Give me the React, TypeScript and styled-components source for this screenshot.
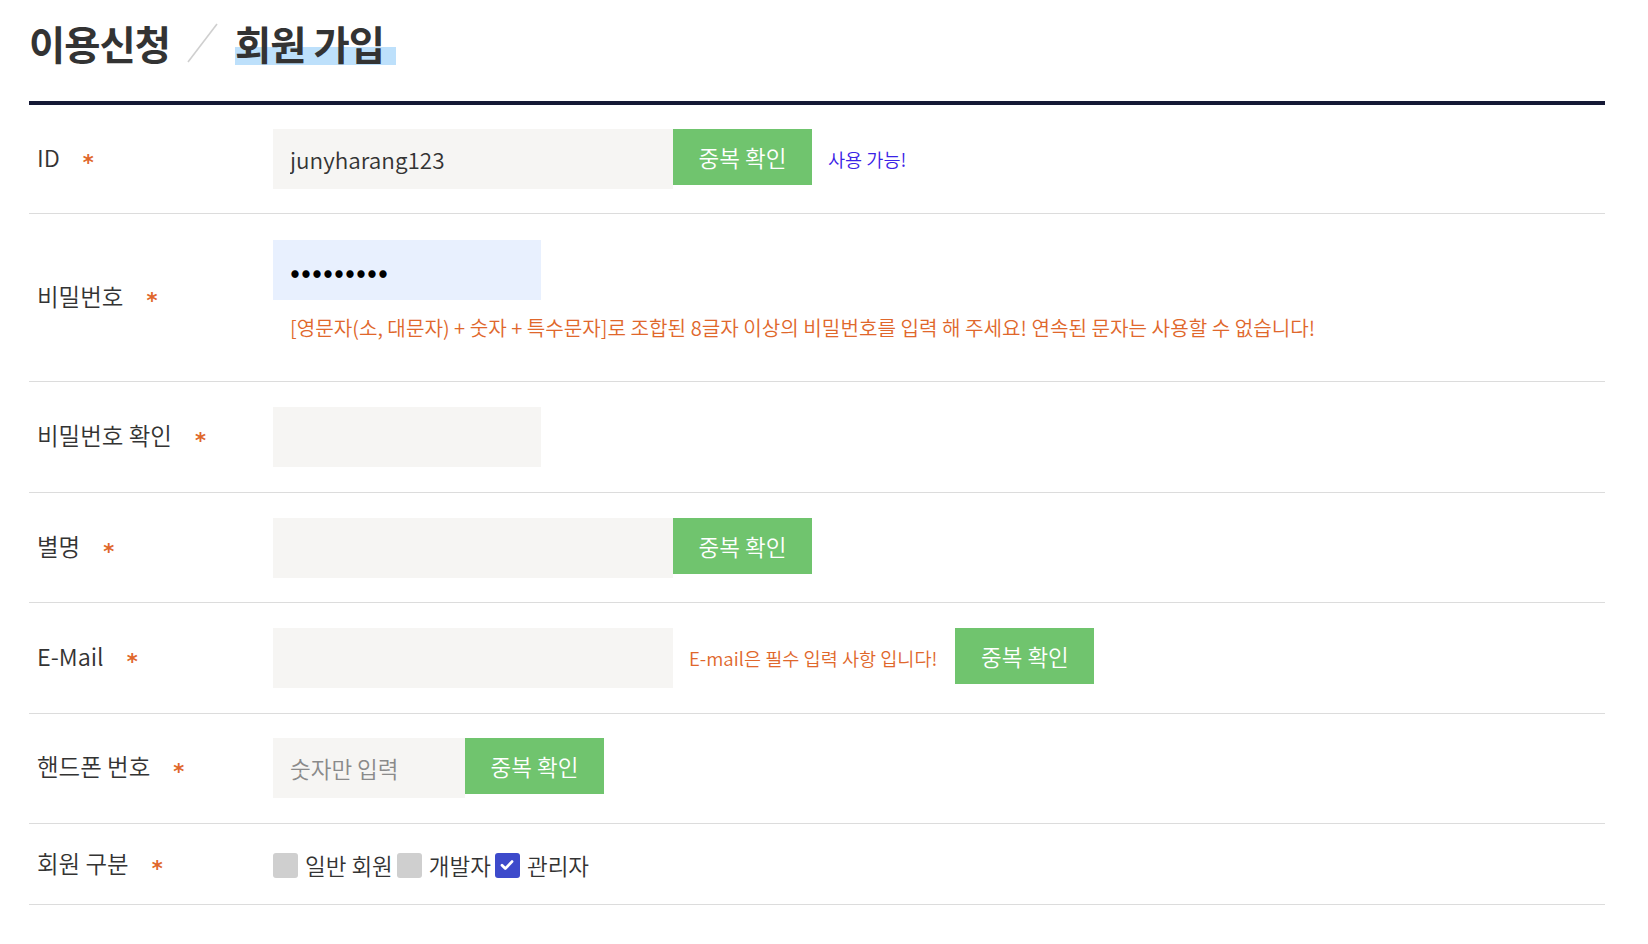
import React from "react";
import styled, { createGlobalStyle } from "styled-components";

const GlobalStyle = createGlobalStyle`
  html, body { margin: 0; padding: 0; background: #fff; }
  body { font-family: "Noto Sans CJK KR", "Noto Sans", sans-serif; color: #333; }
  * { box-sizing: border-box; }
`;

const Page = styled.div`
  padding: 0 43px 0 29px;
`;

const Header = styled.div`
  display: flex;
  align-items: flex-start;
  height: 105px;
  padding: 14px 0 0 0;
  border-bottom: 4px solid #151935;
`;

const Title = styled.h1`
  margin: 0;
  display: flex;
  align-items: center;
  font-size: 39.4px;
  line-height: 58px;
  font-weight: 700;
  color: #333;
  letter-spacing: -1px;
`;

const Slash = styled.svg`
  margin: 0 17px 0 17px;
  flex: none;
`;

const Highlight = styled.span`
  padding-right: 12px;
  background: linear-gradient(
    to bottom,
    transparent 0,
    transparent 57%,
    #bde0fb 57%,
    #bde0fb 88%,
    transparent 88%
  );
`;

const Row = styled.div<{ $pad: string }>`
  display: flex;
  align-items: center;
  border-bottom: 1px solid #dcdcdc;
  padding: ${(p) => p.$pad};
`;

const Label = styled.div`
  flex: none;
  width: 244px;
  padding: 0 0 4px 8px;
  display: flex;
  align-items: center;
  font-size: 23.5px;
  line-height: 32px;
  font-weight: 350;
  color: #333;
`;

const Star = styled.span`
  color: #e0672b;
  margin-left: 23px;
  font-family: "DejaVu Sans", sans-serif;
  font-weight: 700;
  font-size: 21px;
  line-height: 21px;
  transform: translateY(6px);
`;

const Field = styled.div<{ $column?: boolean }>`
  display: flex;
  flex-direction: ${(p) => (p.$column ? "column" : "row")};
  align-items: flex-start;
`;

const Input = styled.input<{ $w: number; $autofill?: boolean }>`
  width: ${(p) => p.$w}px;
  height: 60px;
  border: none;
  outline: none;
  padding: 0 17px;
  background: ${(p) => (p.$autofill ? "#e8f0fe" : "#f6f5f3")};
  font-family: inherit;
  font-size: 22.5px;
  font-weight: 350;
  color: #333;
  &::placeholder { color: #8a8a8a; }
  &[type="password"] { font-size: 30px; letter-spacing: 1px; color: #000; }
`;

const Button = styled.button`
  flex: none;
  width: 139px;
  height: 56px;
  border: none;
  background: #70c46e;
  color: #fff;
  font-family: inherit;
  font-size: 22.5px;
  font-weight: 350;
  padding: 0;
  cursor: pointer;
`;

const Message = styled.span<{ $color: string; $ml?: number; $mr?: number }>`
  line-height: 60px;
  font-size: 18.6px;
  font-weight: 350;
  color: ${(p) => p.$color};
  margin-left: ${(p) => p.$ml ?? 16}px;
  margin-right: ${(p) => p.$mr ?? 0}px;
  white-space: nowrap;
`;

const Hint = styled.p`
  margin: 16px 0 15px 17px;
  font-size: 20.15px;
  line-height: 24px;
  font-weight: 350;
  color: #e0672b;
  white-space: nowrap;
`;

const Choices = styled.div`
  display: flex;
  align-items: center;
  gap: 4px;
`;

const Choice = styled.label`
  display: flex;
  align-items: center;
  gap: 7px;
  font-size: 22.5px;
  line-height: 32px;
  font-weight: 350;
  color: #333;
  cursor: pointer;
`;

const Box = styled.span<{ $checked?: boolean }>`
  width: 25px;
  height: 25px;
  border-radius: 3px;
  background: ${(p) => (p.$checked ? "#3d4acb" : "#cfcfcf")};
  display: flex;
  align-items: center;
  justify-content: center;
`;

const HiddenCheck = styled.input`
  display: none;
`;

const Check = ({ label, checked }: { label: string; checked?: boolean }) => (
  <Choice>
    <HiddenCheck type="checkbox" defaultChecked={checked} />
    <Box $checked={checked}>
      {checked && (
        <svg width="16" height="16" viewBox="0 0 16 16" fill="none">
          <path d="M3 8.3l3.3 3.3L13 4.6" stroke="#fff" strokeWidth="2.8" strokeLinecap="round" strokeLinejoin="round" />
        </svg>
      )}
    </Box>
    {label}
  </Choice>
);

const FieldLabel = ({ text }: { text: string }) => (
  <Label>
    {text}
    <Star>*</Star>
  </Label>
);

export default function App() {
  return (
    <>
      <GlobalStyle />
      <Page>
        <Header>
          <Title>
            이용신청
            <Slash width="31" height="40" viewBox="0 0 31 40">
              <line x1="1" y1="39" x2="30" y2="1" stroke="#cfcfcf" strokeWidth="1.6" />
            </Slash>
            <Highlight>회원 가입</Highlight>
          </Title>
        </Header>

        <Row $pad="24px 0 24px">
          <FieldLabel text="ID" />
          <Field>
            <Input $w={400} defaultValue="junyharang123" />
            <Button>중복 확인</Button>
            <Message $color="#3a22e6">사용 가능!</Message>
          </Field>
        </Row>

        <Row $pad="26px 0 26px">
          <FieldLabel text="비밀번호" />
          <Field $column>
            <Input $w={268} $autofill type="password" defaultValue="123456789" />
            <Hint>
              [영문자(소, 대문자) + 숫자 + 특수문자]로 조합된 8글자 이상의 비밀번호를 입력 해 주세요! 연속된 문자는 사용할 수 없습니다!
            </Hint>
          </Field>
        </Row>

        <Row $pad="25px 0 25px">
          <FieldLabel text="비밀번호 확인" />
          <Field>
            <Input $w={268} type="text" />
          </Field>
        </Row>

        <Row $pad="25px 0 24px">
          <FieldLabel text="별명" />
          <Field>
            <Input $w={400} />
            <Button>중복 확인</Button>
          </Field>
        </Row>

        <Row $pad="25px 0 25px">
          <FieldLabel text="E-Mail" />
          <Field>
            <Input $w={400} />
            <Message $color="#e0672b" $mr={18}>E-mail은 필수 입력 사항 입니다!</Message>
            <Button>중복 확인</Button>
          </Field>
        </Row>

        <Row $pad="24px 0 25px">
          <FieldLabel text="핸드폰 번호" />
          <Field>
            <Input $w={192} placeholder="숫자만 입력" />
            <Button>중복 확인</Button>
          </Field>
        </Row>

        <Row $pad="23px 0 21px">
          <FieldLabel text="회원 구분" />
          <Choices>
            <Check label="일반 회원" />
            <Check label="개발자" />
            <Check label="관리자" checked />
          </Choices>
        </Row>
      </Page>
    </>
  );
}
